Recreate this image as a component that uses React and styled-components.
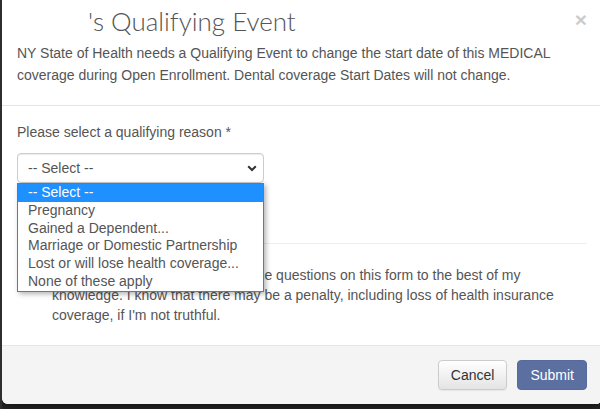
import React from "react";
import styled, { createGlobalStyle } from "styled-components";

const Global = createGlobalStyle`
  html, body { margin: 0; padding: 0; }
  body {
    background: #262626;
    width: 600px;
    height: 409px;
    overflow: hidden;
    font-family: "Liberation Sans", Arial, sans-serif;
    font-size: 14px;
    color: #555;
  }
`;

const Page = styled.div`
  width: 600px;
  height: 409px;
  overflow: hidden;
  border-left: 2px solid #2e2e2e;
  box-sizing: border-box;
`;

const Modal = styled.div`
  width: 600px;
  background: #fff;
  border-radius: 0 0 6px 6px;
  box-shadow: 0 3px 9px rgba(0, 0, 0, 0.5);
`;

const Header = styled.div`
  padding: 6px 15px 19px;
  border-bottom: 1px solid #e5e5e5;
`;

const TitleRow = styled.div`
  display: flex;
  justify-content: space-between;
  align-items: flex-start;
`;

const Title = styled.h4`
  margin: 0;
  font-family: "Lato", "Open Sans", sans-serif;
  font-weight: 300;
  font-size: 26px;
  line-height: 30px;
  color: #555;
  display: flex;
`;

const NameSlot = styled.span`
  display: inline-block;
  width: 71px;
`;

const Close = styled.button`
  margin-top: 3px;
  padding: 0;
  border: 0;
  background: transparent;
  font-family: "Liberation Sans", Arial, sans-serif;
  font-size: 21px;
  font-weight: bold;
  line-height: 1;
  color: #000;
  opacity: 0.2;
`;

const Intro = styled.p`
  margin: 6px 0 0;
  line-height: 22px;
`;

const Body = styled.div`
  padding: 16px 15px 20px;
`;

const Label = styled.div`
  line-height: 20px;
  margin-bottom: 11px;
`;

const SelectWrap = styled.div`
  position: relative;
  width: 247px;
`;

const SelectBox = styled.div`
  box-sizing: border-box;
  height: 30px;
  border: 1px solid #ccc;
  border-radius: 4px;
  padding: 0 6px 0 10px;
  display: flex;
  align-items: center;
  justify-content: space-between;
  color: #555;
  box-shadow: inset 0 1px 1px rgba(0, 0, 0, 0.075);
`;

const OptionList = styled.ul`
  position: absolute;
  left: 0;
  top: 100%;
  z-index: 5;
  box-sizing: border-box;
  width: 247px;
  margin: 0;
  padding: 0;
  list-style: none;
  background: #fff;
  border: 1px solid #767676;
  box-shadow: 2px 2px 5px rgba(0, 0, 0, 0.3);
`;

const Option = styled.li`
  height: 17.8px;
  line-height: 17.8px;
  padding-left: 10px;
  background: ${(p) => (p.$active ? "#1e90ff" : "transparent")};
  color: ${(p) => (p.$active ? "#fff" : "#555")};
  white-space: nowrap;
`;

const Divider = styled.hr`
  margin: 60px 0 0;
  border: 0;
  border-top: 1px solid #eee;
`;

const CheckRow = styled.label`
  display: grid;
  grid-template-columns: 35px 1fr;
  margin-top: 21px;
  line-height: 20px;
`;

const Check = styled.input`
  margin: 4px 0 0 15px;
  width: 13px;
  height: 13px;
`;

const Footer = styled.div`
  border-top: 1px solid #e5e5e5;
  background: #f4f4f4;
  padding: 14px 15px;
  border-radius: 0 0 6px 6px;
  display: flex;
  justify-content: flex-end;
  gap: 10px;
`;

const Button = styled.button`
  box-sizing: border-box;
  height: 30px;
  padding: 0 12px;
  font-family: "Liberation Sans", Arial, sans-serif;
  font-size: 14px;
  border-radius: 4px;
  border: 1px solid ${(p) => (p.$primary ? "#566a9b" : "#ccc")};
  background: ${(p) =>
    p.$primary ? "#5b6fa1" : "linear-gradient(#ffffff, #e4e4e4)"};
  color: ${(p) => (p.$primary ? "#fff" : "#333")};
  box-shadow: ${(p) => (p.$primary ? "none" : "0 1px 1px rgba(0,0,0,0.06)")};
`;

const Behind = styled.div`
  display: flex;
  justify-content: space-between;
  padding: 2px 80px 0 31px;
  font-weight: bold;
  font-size: 15px;
  color: #4a4a4a;
`;

const Chevron = () => (
  <svg width="10" height="7" viewBox="0 0 10 7">
    <path d="M1.2 1.3 L5 5 L8.8 1.3" fill="none" stroke="#333" strokeWidth="2" />
  </svg>
);

const options = [
  "-- Select --",
  "Pregnancy",
  "Gained a Dependent...",
  "Marriage or Domestic Partnership",
  "Lost or will lose health coverage...",
  "None of these apply",
];

export default function App() {
  return (
    <>
      <Global />
      <Page>
        <Modal>
          <Header>
            <TitleRow>
              <Title>
                <NameSlot />
                's Qualifying Event
              </Title>
              <Close aria-label="Close">×</Close>
            </TitleRow>
            <Intro>
              NY State of Health needs a Qualifying Event to change the start
              date of this MEDICAL coverage during Open Enrollment. Dental
              coverage Start Dates will not change.
            </Intro>
          </Header>
          <Body>
            <Label>Please select a qualifying reason *</Label>
            <SelectWrap>
              <SelectBox>
                <span>-- Select --</span>
                <Chevron />
              </SelectBox>
              <OptionList>
                {options.map((o, i) => (
                  <Option key={o} $active={i === 0}>
                    {o}
                  </Option>
                ))}
              </OptionList>
            </SelectWrap>
            <Divider />
            <CheckRow>
              <Check type="checkbox" />
              <span>
                I certify that I have answered all the questions on this form
                to the best of my knowledge. I know that there may be a
                penalty, including loss of health insurance coverage, if I'm
                not truthful.
              </span>
            </CheckRow>
          </Body>
          <Footer>
            <Button>Cancel</Button>
            <Button $primary>Submit</Button>
          </Footer>
        </Modal>
        <Behind>
          <span>Ahmed Kaito Jordan (F6)</span>
          <span>Member Since</span>
        </Behind>
      </Page>
    </>
  );
}
